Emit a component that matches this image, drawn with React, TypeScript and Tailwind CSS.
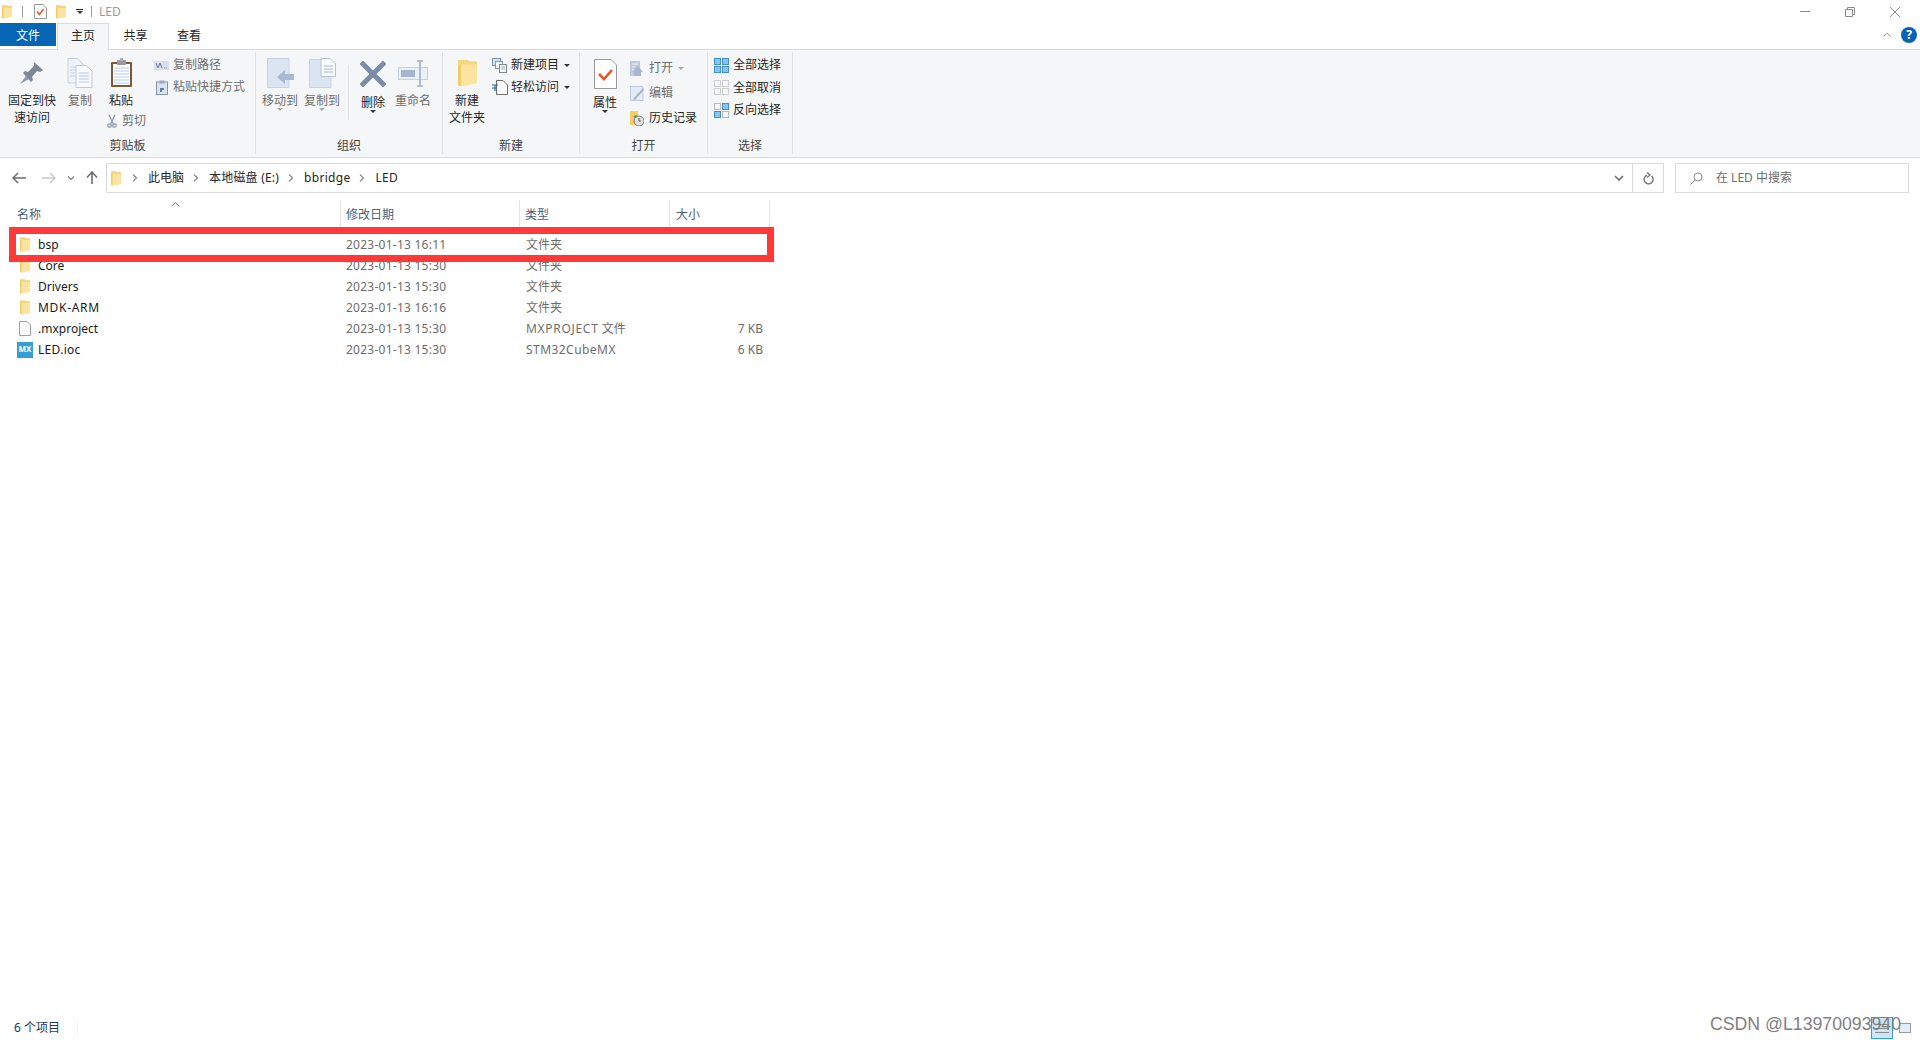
import React from "react";

const FolderIcon = ({ className }: { className: string }) => (
  <svg viewBox="0 0 10 16" preserveAspectRatio="none" className={className}>
    <path d="M0 0.5 H5 L6 1.5 H10 V13.5 L1.5 15.5 L0 15 Z" fill="#f3c962" />
    <path d="M1.5 3 H10 V13.5 L1.5 15.5 Z" fill="#fde3a0" />
    <path d="M0 0.5 H5 L6 1.5 H10 V3 H1.5 L0 4 Z" fill="#f7d57e" />
  </svg>
);

const PinIcon = () => (
  <svg width="24" height="24" viewBox="0 0 24 24" className="block">
    <path d="M14 1 L23 9 L20 11 L17 10 L12 16 L13 19 L11 21 L3 12 L5 10 L8 11 L14 5 Z" fill="#7d8896" />
    <path d="M6 15 L0 23 L9 18 Z" fill="#8f99a6" />
  </svg>
);

const CopyIcon = () => (
  <svg width="26" height="30" viewBox="0 0 26 30" className="block">
    <path d="M1 0.5 H10 L16 6 V25 H1 Z" fill="#eef3f9" stroke="#c3d0e2" />
    <path d="M3 9 H8 M3 12 H8 M3 15 H8 M3 18 H8" stroke="#c5d3e6" />
    <path d="M9 7.5 H19 L25 13 V29.5 H9 Z" fill="#f7f9fc" stroke="#bccadf" />
    <path d="M12 15 H22 M12 18 H22 M12 21 H22 M12 24 H22" stroke="#b8c8df" />
  </svg>
);

const PasteIcon = () => (
  <svg width="23" height="30" viewBox="0 0 23 30" className="block">
    <rect x="1" y="4" width="21" height="25" rx="1" fill="#7b5a3c" />
    <rect x="3" y="6" width="17" height="21" fill="#fbfcfe" />
    <path d="M4 10 H19 M4 13 H19 M4 16 H19 M4 19 H19 M4 22 H19 M4 25 H19" stroke="#b9d0ea" />
    <rect x="7" y="2" width="9" height="5" rx="1" fill="#9a9a9a" />
    <rect x="10" y="0" width="3" height="3" fill="#b0b0b0" />
  </svg>
);

const ScissorsIcon = () => (
  <svg width="11" height="15" viewBox="0 0 11 15" className="block">
    <path d="M2 0 L7 10 M9 0 L4 10" stroke="#8a9ab2" strokeWidth="1.4" fill="none" />
    <circle cx="2.8" cy="12" r="2" fill="none" stroke="#8a9ab2" strokeWidth="1.4" />
    <circle cx="8.2" cy="12" r="2" fill="none" stroke="#8a9ab2" strokeWidth="1.4" />
  </svg>
);

const CopyPathIcon = () => (
  <svg width="15" height="9" viewBox="0 0 15 9" className="block">
    <rect width="15" height="9" fill="#d6e0ee" />
    <path d="M2 2 L4 7 L6 2 L8 7 M10 7 H10.8 M12 7 H12.8" stroke="#6f7f96" fill="none" />
  </svg>
);

const ShortcutIcon = () => (
  <svg width="12" height="15" viewBox="0 0 12 15" className="block">
    <rect x="0.5" y="2" width="11" height="12.5" fill="#d9e2ee" stroke="#8496ad" />
    <rect x="3.5" y="0.5" width="5" height="3" fill="#9aa7b8" />
    <path d="M4 12 V8 H8 V10 H6 V12 Z" fill="#5a7fa8" />
  </svg>
);

const MoveIcon = () => (
  <svg width="27" height="30" viewBox="0 0 27 30" className="block">
    <path d="M0.5 0.5 H22 V29.5 H0.5 Z" fill="#dbe4f1" stroke="#c6d3e5" />
    <path d="M10 19 L18 12 V16 H27 V22 H18 V26 Z" fill="#a9b9d0" />
  </svg>
);

const CopyToIcon = () => (
  <svg width="27" height="30" viewBox="0 0 27 30" className="block">
    <path d="M0.5 1.5 H22 V29.5 H0.5 Z" fill="#dbe4f1" stroke="#c6d3e5" />
    <path d="M12 0.5 H21 L26.5 6 V18.5 H12 Z" fill="#f7f9fc" stroke="#b4c3d8" />
    <path d="M15 8 H24 M15 11 H24 M15 14 H24" stroke="#a8b8cf" />
  </svg>
);

const DeleteIcon = () => (
  <svg width="26" height="26" viewBox="0 0 26 26" className="block">
    <path d="M3 3 L23 23 M23 3 L3 23" stroke="#7b8ca9" strokeWidth="5" strokeLinecap="square" />
  </svg>
);

const RenameIcon = () => (
  <svg width="30" height="27" viewBox="0 0 30 27" className="block">
    <rect x="0.5" y="7.5" width="29" height="12" fill="#eaf0f7" stroke="#c3d0e2" />
    <rect x="3" y="10" width="14" height="7" fill="#a6b6cc" />
    <path d="M19 1 H25 M22 1 V26 M19 26 H25" stroke="#a0b0c6" strokeWidth="1.6" fill="none" />
  </svg>
);

const NewItemIcon = () => (
  <svg width="15" height="15" viewBox="0 0 15 15" className="block">
    <rect x="0.5" y="0.5" width="8" height="7" fill="#d6e6f5" stroke="#7590ad" />
    <rect x="3.5" y="3.5" width="7" height="7" fill="#f2f5f9" stroke="#8a97a8" />
    <rect x="7.5" y="6.5" width="7" height="8" fill="#fff" stroke="#7d8896" />
    <path d="M9 9 H13 M9 11 H13" stroke="#a0a8b4" />
  </svg>
);

const EasyIcon = () => (
  <svg width="16" height="15" viewBox="0 0 16 15" className="block">
    <path d="M4.5 0.5 H11 L15.5 5 V14.5 H4.5 Z" fill="#fff" stroke="#6d6d6d" />
    <path d="M0 5 H6 M0 8 H5 M3 5 V11" stroke="#1e6fb8" strokeWidth="1.2" />
  </svg>
);

const PropsIcon = () => (
  <svg width="23" height="30" viewBox="0 0 23 30" className="block">
    <path d="M0.5 0.5 H17 L22.5 6 V29.5 H0.5 Z" fill="#fff" stroke="#9a9a9a" />
    <path d="M5 15 L10 20 L18 11" stroke="#e4572a" strokeWidth="2.6" fill="none" />
  </svg>
);

const OpenIcon = () => (
  <svg width="13" height="15" viewBox="0 0 13 15" className="block">
    <rect width="10" height="15" fill="#bccadc" />
    <path d="M2 3 H8 M2 6 H5 M2 9 H5" stroke="#f0f4f9" />
    <path d="M4 15 V11 H2 L8 5 L13 11 H11 V15 Z" fill="#a6b6cc" />
  </svg>
);

const EditIcon = () => (
  <svg width="14" height="15" viewBox="0 0 14 15" className="block">
    <path d="M0.5 0.5 H13 V14.5 H0.5 Z" fill="#e4ebf4" stroke="#c0cde0" />
    <path d="M3 13 L13 2 L14 4 L5 14 Z" fill="#a6b6cc" />
  </svg>
);

const HistoryIcon = () => (
  <svg width="14" height="15" viewBox="0 0 14 15" className="block">
    <path d="M0 0 H8 V14 H0 Z" fill="#f6cd66" />
    <circle cx="9" cy="10" r="5" fill="#e3e3e3" stroke="#7a7a7a" />
    <path d="M9 7 V10 H11" stroke="#555" fill="none" />
    <path d="M3 6 A 5 5 0 0 1 7 4 L6 7 Z" fill="#3fa63f" />
  </svg>
);

const SelectIcon = ({ mode }: { mode: "all" | "none" | "invert" }) => {
  const on = (x: number, y: number) =>
    mode === "all" || (mode === "invert" && ((x === 8 && y === 0) || (x === 0 && y === 8)));
  return (
    <svg width="15" height="15" viewBox="0 0 15 15" className="block">
      {[0, 8].flatMap((x) =>
        [0, 8].map((y) => (
          <rect
            key={`${x}-${y}`}
            x={x + 0.5}
            y={y + 0.5}
            width="6"
            height="6"
            fill={on(x, y) ? "#8cc4f0" : "#f5f6f7"}
            stroke={on(x, y) ? "#3f8fd2" : mode === "none" ? "#cfcfcf" : "#bdbdbd"}
          />
        )),
      )}
    </svg>
  );
};

const Caret = ({ light }: { light?: boolean }) => (
  <div
    className={`w-0 h-0 border-l-[3px] border-r-[3px] border-t-[3px] border-l-transparent border-r-transparent ${
      light ? "border-t-[#a8a8a8]" : "border-t-[#333333]"
    }`}
  />
);

const LargeBtn = ({
  className,
  icon,
  iconClass,
  lines,
  muted,
  caret,
  caretLight,
}: {
  className: string;
  icon: React.ReactNode;
  iconClass: string;
  lines: string[];
  muted?: boolean;
  caret?: boolean;
  caretLight?: boolean;
}) => (
  <div className={`flex flex-col items-center shrink-0 ${className}`}>
    <div className={`flex items-center justify-center ${iconClass}`}>{icon}</div>
    {lines.map((l) => (
      <div key={l} className={`h-[17px] leading-[17px] whitespace-nowrap ${muted ? "text-[#6f6f6f]" : "text-[#262626]"}`}>
        {l}
      </div>
    ))}
    {caret && (
      <div className="-mt-[1px]">
        <Caret light={caretLight} />
      </div>
    )}
  </div>
);

const SmallBtn = ({
  icon,
  label,
  muted,
  caret,
  caretLight,
}: {
  icon: React.ReactNode;
  label: string;
  muted?: boolean;
  caret?: boolean;
  caretLight?: boolean;
}) => (
  <div className="flex items-center h-[18px] whitespace-nowrap">
    <div className="w-[19px] flex items-center justify-start shrink-0">{icon}</div>
    <span className={muted ? "text-[#6f6f6f]" : "text-[#262626]"}>{label}</span>
    {caret && (
      <div className="ml-[5px]">
        <Caret light={caretLight} />
      </div>
    )}
  </div>
);

const Group = ({
  className,
  label,
  children,
}: {
  className: string;
  label: string;
  children: React.ReactNode;
}) => (
  <div className={`relative flex flex-col shrink-0 h-[102px] border-r border-[#e0e1e2] ${className}`}>
    <div className="flex flex-1 min-h-0">{children}</div>
    <div className="h-[17px] leading-[17px] text-center text-[#444444]">{label}</div>
  </div>
);

const Ribbon = () => (
  <div className="h-[109px] bg-[#f5f6f7] border-t border-b border-[#dadbdc] flex pt-[2px]">
    <Group className="w-[256px]" label="剪贴板">
      <LargeBtn
        className="w-[50px] ml-[7px]"
        iconClass="h-[40px] pt-[5px] pb-[3px]"
        icon={<PinIcon />}
        lines={["固定到快", "速访问"]}
      />
      <LargeBtn
        className="w-[30px] ml-[8px]"
        iconClass="h-[40px] pt-[5px] pb-[3px]"
        icon={<CopyIcon />}
        lines={["复制"]}
        muted
      />
      <div className="flex flex-col w-[50px] ml-[1px] shrink-0">
        <LargeBtn className="w-[50px]" iconClass="h-[40px] pt-[5px] pb-[3px]" icon={<PasteIcon />} lines={["粘贴"]} />
        <div className="flex items-center mt-[3px] ml-[11px] h-[18px] text-[#6f6f6f] whitespace-nowrap">
          <ScissorsIcon />
          <span className="ml-[5px]">剪切</span>
        </div>
      </div>
      <div className="flex flex-col ml-[8px] pt-[4px] gap-[4px]">
        <SmallBtn icon={<CopyPathIcon />} label="复制路径" muted />
        <SmallBtn
          icon={
            <div className="pl-[2px]">
              <ShortcutIcon />
            </div>
          }
          label="粘贴快捷方式"
          muted
        />
      </div>
    </Group>
    <Group className="w-[187px]" label="组织">
      <LargeBtn
        className="w-[40px] ml-[4px]"
        iconClass="h-[40px] pt-[5px] pb-[3px]"
        icon={<MoveIcon />}
        lines={["移动到"]}
        muted
        caret
        caretLight
      />
      <LargeBtn
        className="w-[40px] ml-[2px]"
        iconClass="h-[40px] pt-[5px] pb-[3px]"
        icon={<CopyToIcon />}
        lines={["复制到"]}
        muted
        caret
        caretLight
      />
      <div className="w-px h-[55px] mt-[13px] ml-[6px] bg-[#e0e1e2]" />
      <LargeBtn
        className="w-[40px] ml-[4px]"
        iconClass="h-[42px] pt-[5px] pb-[3px]"
        icon={<DeleteIcon />}
        lines={["删除"]}
        caret
      />
      <LargeBtn
        className="w-[40px]"
        iconClass="h-[40px] pt-[5px] pb-[3px]"
        icon={<RenameIcon />}
        lines={["重命名"]}
        muted
      />
    </Group>
    <Group className="w-[137px]" label="新建">
      <LargeBtn
        className="w-[40px] ml-[4px]"
        iconClass="h-[40px] pt-[5px] pb-[3px]"
        icon={<FolderIcon className="block w-[19px] h-[28px]" />}
        lines={["新建", "文件夹"]}
      />
      <div className="flex flex-col ml-[5px] pt-[4px] gap-[4px]">
        <SmallBtn icon={<NewItemIcon />} label="新建项目" caret />
        <SmallBtn icon={<EasyIcon />} label="轻松访问" caret />
      </div>
    </Group>
    <Group className="w-[128px]" label="打开">
      <LargeBtn
        className="w-[40px] ml-[5px]"
        iconClass="h-[42px] pt-[5px] pb-[4px]"
        icon={<PropsIcon />}
        lines={["属性"]}
        caret
      />
      <div className="flex flex-col ml-[5px] pt-[7px] gap-[7px]">
        <SmallBtn icon={<OpenIcon />} label="打开" muted caret caretLight />
        <SmallBtn icon={<EditIcon />} label="编辑" muted />
        <SmallBtn icon={<HistoryIcon />} label="历史记录" />
      </div>
    </Group>
    <Group className="w-[85px]" label="选择">
      <div className="flex flex-col ml-[6px] pt-[4px] gap-[4.5px]">
        <SmallBtn icon={<SelectIcon mode="all" />} label="全部选择" />
        <SmallBtn icon={<SelectIcon mode="none" />} label="全部取消" />
        <SmallBtn icon={<SelectIcon mode="invert" />} label="反向选择" />
      </div>
    </Group>
  </div>
);

const Sep = () => (
  <svg width="6" height="8" viewBox="0 0 6 8" className="block ml-[9px] mr-[10px] shrink-0">
    <path d="M1 0.5 L4.5 4 L1 7.5" stroke="#8a8a8a" strokeWidth="1.2" fill="none" />
  </svg>
);

const AddressRow = () => (
  <div className="h-[30px] mt-[5px] flex items-stretch">
    <div className="w-[106px] relative flex items-center shrink-0">
      <svg width="14" height="12" viewBox="0 0 14 12" className="block ml-[12px]">
        <path d="M6 1 L1 6 L6 11 M1 6 H14" stroke="#6d6d6d" strokeWidth="1.5" fill="none" />
      </svg>
      <svg width="14" height="12" viewBox="0 0 14 12" className="block ml-[16px]">
        <path d="M8 1 L13 6 L8 11 M0 6 H13" stroke="#c8c8c8" strokeWidth="1.5" fill="none" />
      </svg>
      <svg width="8" height="5" viewBox="0 0 8 5" className="block ml-[11px]">
        <path d="M1 0.5 L4 3.5 L7 0.5" stroke="#7a7a7a" strokeWidth="1.2" fill="none" />
      </svg>
      <svg width="12" height="14" viewBox="0 0 12 14" className="block ml-[11px]">
        <path d="M6 13 V2 M1 6.5 L6 1 L11 6.5" stroke="#6d6d6d" strokeWidth="1.6" fill="none" />
      </svg>
    </div>
    <div className="w-[1558px] border border-[#d9d9d9] flex items-center shrink-0">
      <div className="flex-1 flex items-center pl-[4px] text-[#262626]">
        <FolderIcon className="block w-[10px] h-[15px]" />
        <div className="w-[2px]" />
        <Sep />
        <span>此电脑</span>
        <Sep />
        <span className="tracking-[0.2px]">本地磁盘 (E:)</span>
        <Sep />
        <span className="tracking-[0.3px]">bbridge</span>
        <Sep />
        <span className="tracking-[0.3px]">LED</span>
      </div>
      <div className="w-[27px] h-full flex items-center justify-center border-r border-[#d9d9d9]">
        <svg width="10" height="6" viewBox="0 0 10 6" className="block">
          <path d="M1 1 L5 5 L9 1" stroke="#6d6d6d" strokeWidth="1.6" fill="none" />
        </svg>
      </div>
      <div className="w-[30px] flex items-center justify-center">
        <svg width="11" height="13" viewBox="0 0 11 13" className="block">
          <path d="M8.6 4 A4.5 4.5 0 1 1 4 3.2 M4 0.5 L7 3 L4 5.5" stroke="#6d6d6d" strokeWidth="1.3" fill="none" />
        </svg>
      </div>
    </div>
    <div className="w-[234px] ml-[11px] border border-[#d9d9d9] flex items-center pl-[14px] text-[#6d6d6d] shrink-0">
      <svg width="13" height="13" viewBox="0 0 13 13" className="block">
        <circle cx="8" cy="5" r="4" stroke="#8a8a8a" fill="none" />
        <path d="M5 8 L0.5 12.5" stroke="#8a8a8a" fill="none" />
      </svg>
      <span className="ml-[13px]">在 LED 中搜索</span>
    </div>
  </div>
);

const HeaderCell = ({ className, label }: { className: string; label: string }) => (
  <div className={`h-[27px] pt-[2px] flex items-center border-r border-[#e5e5e5] text-[#4c607a] shrink-0 ${className}`}>{label}</div>
);

const FileIcon = () => (
  <svg width="12" height="15" viewBox="0 0 12 15" className="block">
    <path d="M0.5 0.5 H8 L11.5 4 V14.5 H0.5 Z" fill="#fafafa" stroke="#9e9e9e" />
  </svg>
);

const MxIcon = () => (
  <div className="w-[16px] h-[16px] bg-[#35a0d8] text-white text-[8px] leading-[14px] font-bold text-center">MX</div>
);

const smallFolder = <FolderIcon className="block w-[10px] h-[15px]" />;

const rows: { icon: React.ReactNode; name: React.ReactNode; date: string; type: React.ReactNode; size: string }[] = [
  { icon: smallFolder, name: "bsp", date: "2023-01-13 16:11", type: "文件夹", size: "" },
  { icon: smallFolder, name: "Core", date: "2023-01-13 15:30", type: "文件夹", size: "" },
  { icon: smallFolder, name: "Drivers", date: "2023-01-13 15:30", type: "文件夹", size: "" },
  {
    icon: smallFolder,
    name: <span className="tracking-[0.7px]">MDK-ARM</span>,
    date: "2023-01-13 16:16",
    type: "文件夹",
    size: "",
  },
  {
    icon: <FileIcon />,
    name: ".mxproject",
    date: "2023-01-13 15:30",
    type: (
      <>
        <span className="tracking-[0.7px]">MXPROJECT</span> 文件
      </>
    ),
    size: "7 KB",
  },
  {
    icon: <MxIcon />,
    name: <span className="tracking-[0.3px]">LED.ioc</span>,
    date: "2023-01-13 15:30",
    type: <span className="tracking-[0.45px]">STM32CubeMX</span>,
    size: "6 KB",
  },
];

const FileList = () => (
  <div className="relative flex-1 min-h-0 mt-[7px]">
    <div className="flex">
      <HeaderCell className="w-[341px] pl-[17px]" label="名称" />
      <HeaderCell className="w-[179px] pl-[5px]" label="修改日期" />
      <HeaderCell className="w-[150px] pl-[5px]" label="类型" />
      <HeaderCell className="w-[100px] pl-[6px]" label="大小" />
    </div>
    <svg width="9" height="5" viewBox="0 0 9 5" className="block absolute left-[171px] top-[2px]">
      <path d="M0.5 4.5 L4.5 0.5 L8.5 4.5" stroke="#7a7a7a" fill="none" />
    </svg>
    <div className="mt-[7px]">
      {rows.map((r) => (
        <div key={r.date + String(typeof r.name === "string" ? r.name : r.size + r.date)} className="flex h-[21px] items-center">
          <div className="w-[341px] flex items-center shrink-0 text-[#1a1a1a]">
            <div className="w-[38px] pl-[12px] shrink-0">
              <div className="w-[26px] flex justify-center">{r.icon}</div>
            </div>
            <span>{r.name}</span>
          </div>
          <div className="w-[180px] pl-[5px] text-[#6d6d6d] shrink-0 tracking-[0.25px]">{r.date}</div>
          <div className="w-[150px] pl-[5px] text-[#6d6d6d] shrink-0">{r.type}</div>
          <div className="w-[92px] text-right text-[#6d6d6d] shrink-0">{r.size}</div>
        </div>
      ))}
    </div>
    <div className="absolute left-[9px] top-[27px] w-[765px] h-[35px] border-[7px] border-[#ff3838]" />
  </div>
);

export default function App() {
  return (
    <div className="relative w-[1920px] h-[1040px] overflow-hidden bg-white flex flex-col text-[12px] [font-family:'Noto_Sans','Noto_Sans_CJK_SC',sans-serif]">
      <div className="h-[23px] flex items-center shrink-0">
        <FolderIcon className="block w-[10px] h-[14px] ml-[2px]" />
        <div className="w-px h-[11px] bg-[#9a9a9a] ml-[10px]" />
        <svg width="13" height="15" viewBox="0 0 13 15" className="block ml-[11px]">
          <path d="M0.5 0.5 H9 L12.5 4 V14.5 H0.5 Z" fill="#fff" stroke="#9a9a9a" />
          <path d="M3 7.5 L5.5 10.5 L9.5 5" stroke="#e4572a" strokeWidth="1.5" fill="none" />
        </svg>
        <FolderIcon className="block w-[10px] h-[14px] ml-[9px]" />
        <div className="ml-[10px] flex flex-col items-center gap-[1px]">
          <div className="w-[7px] h-px bg-[#222222]" />
          <Caret />
        </div>
        <div className="w-px h-[11px] bg-[#9a9a9a] ml-[8px]" />
        <span className="ml-[7px] text-[#9a9a9a]">LED</span>
        <div className="ml-auto flex items-center h-full">
          <div className="w-[10px] h-px bg-[#8a8a8a] mr-[35px]" />
          <svg width="10" height="10" viewBox="0 0 10 10" className="block mr-[35px]">
            <path d="M0.5 2.5 H7.5 V9.5 H0.5 Z M2.5 2.5 V0.5 H9.5 V7.5 H7.5" stroke="#8a8a8a" fill="none" />
          </svg>
          <svg width="10" height="10" viewBox="0 0 10 10" className="block mr-[20px]">
            <path d="M0 0 L10 10 M10 0 L0 10" stroke="#8a8a8a" fill="none" />
          </svg>
        </div>
      </div>
      <div className="h-[26px] flex shrink-0 relative z-10">
        <div className="w-[56px] h-[23px] bg-[#0665b5] text-white flex items-center justify-center pt-[2px]">文件</div>
        <div className="w-[52px] h-[27px] ml-[1px] bg-[#f5f6f7] border-t border-l border-r border-[#dadbdc] flex items-center justify-center text-[#262626] pb-[2px]">
          主页
        </div>
        <div className="w-[53px] h-[23px] flex items-center justify-center text-[#262626] pt-[2px]">共享</div>
        <div className="w-[54px] h-[23px] flex items-center justify-center text-[#262626] pt-[2px]">查看</div>
        <div className="ml-auto flex items-center h-[23px]">
          <svg width="8" height="5" viewBox="0 0 8 5" className="block mr-[10px]">
            <path d="M0.5 4.5 L4 1 L7.5 4.5" stroke="#a0a0a0" fill="none" />
          </svg>
          <div className="w-[16px] h-[16px] rounded-full bg-[#0a62b8] text-white text-[12px] font-bold flex items-center justify-center mr-[3px] leading-none">
            ?
          </div>
        </div>
      </div>
      <Ribbon />
      <AddressRow />
      <FileList />
      <div className="h-[24px] shrink-0 flex items-center pl-[14px] text-[#1e395b] relative">
        <span>6 个项目</span>
        <div className="w-px h-[16px] bg-[#f0f0f0] ml-[17px]" />
        <div className="ml-auto w-[22px] h-[22px] bg-[#cde6f7] border border-[#3a9ad9] flex flex-col justify-center gap-[3px] px-[3px] mr-[6px]">
          <div className="h-px bg-[#8a8a8a]" />
          <div className="h-px bg-[#8a8a8a]" />
          <div className="h-px bg-[#8a8a8a]" />
        </div>
        <div className="w-[12px] h-[10px] border border-[#9a9a9a] bg-[#dff0fb] mr-[9px]" />
      </div>
      <div className="absolute left-[1710px] top-[1012px] text-[17.7px] leading-[24px] text-[#808080] whitespace-nowrap [font-family:'Liberation_Sans',sans-serif]">
        CSDN @L13970093940
      </div>
    </div>
  );
}
